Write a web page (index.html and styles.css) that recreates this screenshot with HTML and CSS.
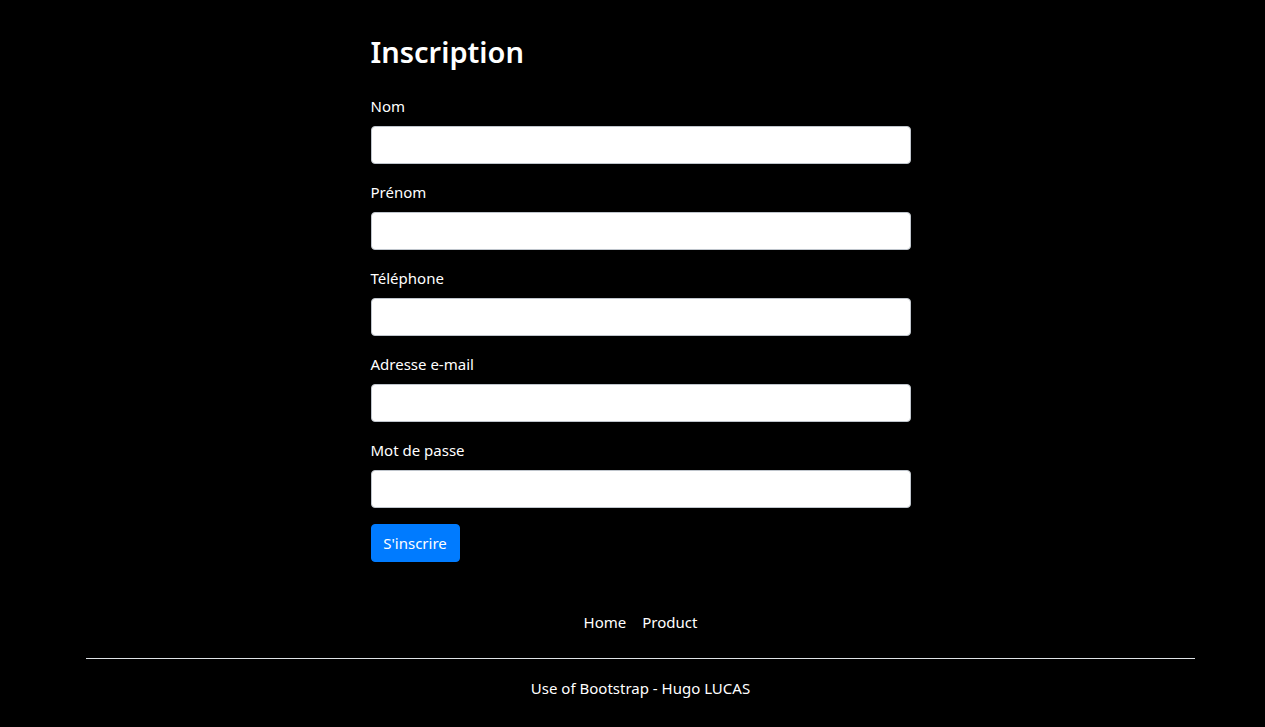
FILE: index.html
```html
<!DOCTYPE html>
<html lang="fr">
<head>
<meta charset="utf-8">
<title>Inscription</title>
<link rel="stylesheet" href="styles.css">
</head>
<body>
<div class="page">
  <main class="form-wrap">
    <h2 class="title">Inscription</h2>
    <form class="form">
      <div class="group">
        <label class="label" for="nom">Nom</label>
        <input class="input" type="text" id="nom">
      </div>
      <div class="group">
        <label class="label" for="prenom">Prénom</label>
        <input class="input" type="text" id="prenom">
      </div>
      <div class="group">
        <label class="label" for="tel">Téléphone</label>
        <input class="input" type="tel" id="tel">
      </div>
      <div class="group">
        <label class="label" for="email">Adresse e-mail</label>
        <input class="input" type="email" id="email">
      </div>
      <div class="group">
        <label class="label" for="mdp">Mot de passe</label>
        <input class="input" type="password" id="mdp">
      </div>
      <button class="btn" type="submit">S'inscrire</button>
    </form>
  </main>
  <footer class="footer">
    <nav class="nav">
      <a class="nav-link" href="#">Home</a>
      <a class="nav-link" href="#">Product</a>
    </nav>
    <hr class="rule">
    <p class="credit">Use of Bootstrap - Hugo LUCAS</p>
  </footer>
</div>
</body>
</html>
```
FILE: styles.css
```css
html, body {
  margin: 0;
  padding: 0;
  background: #000;
}
body {
  color: #fff;
  font-family: "Noto Sans", "Open Sans", sans-serif;
  font-size: 15px;
  line-height: 24px;
}
.page {
  padding-left: 16px;
  display: flex;
  flex-direction: column;
  align-items: center;
}
.form-wrap {
  width: 540px;
  padding-top: 33px;
}
.title {
  margin: 0 0 23px;
  font-size: 29px;
  font-weight: 600;
  line-height: 38px;
}
.form {
  display: flex;
  flex-direction: column;
}
.group {
  display: flex;
  flex-direction: column;
  margin-bottom: 16px;
}
.label {
  margin-bottom: 8px;
  line-height: 24px;
}
.input {
  box-sizing: border-box;
  height: 38px;
  width: 100%;
  border: 1px solid #bfc5cc;
  border-radius: 4px;
  background: #fff;
  padding: 6px 12px;
  font: inherit;
}
.btn {
  align-self: flex-start;
  box-sizing: border-box;
  height: 38px;
  width: 89px;
  padding: 0;
  border: 1px solid #007bff;
  border-radius: 4px;
  background: #007bff;
  color: #fff;
  font: inherit;
  cursor: pointer;
}
.footer {
  width: 100%;
  display: flex;
  flex-direction: column;
  align-items: center;
  padding-top: 40px;
}
.nav {
  display: flex;
  gap: 16px;
  padding: 8px 0;
}
.nav-link {
  color: #fff;
  text-decoration: none;
}
.rule {
  width: 1109px;
  margin: 16px 0 0;
  border: 0;
  border-top: 1px solid #dee2e6;
}
.credit {
  margin: 17px 0 0;
}
```
